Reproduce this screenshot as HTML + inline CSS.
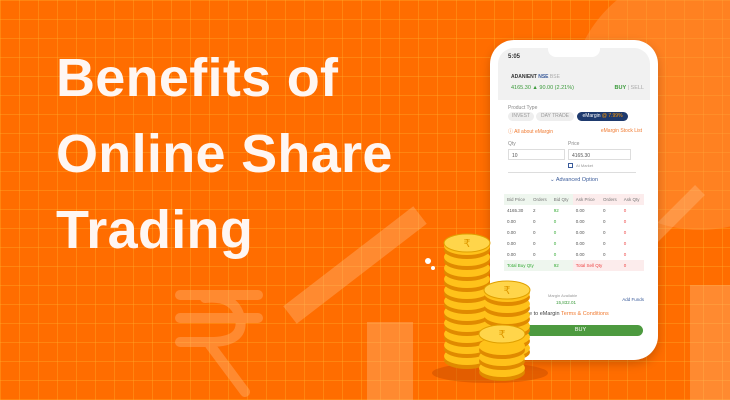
<!DOCTYPE html><html><head><style>
*{margin:0;padding:0;box-sizing:border-box}
body{width:730px;height:400px;overflow:hidden;position:relative;background:#ff6d00;font-family:"Liberation Sans",sans-serif}
.grid{position:absolute;inset:0;background-image:linear-gradient(rgba(255,170,40,.4) 1px,transparent 1px),linear-gradient(90deg,rgba(255,170,40,.4) 1px,transparent 1px);background-size:19px 19px}
h1{position:absolute;left:56px;top:40px;color:#fff6f2;font-size:54px;line-height:76px;font-weight:bold;letter-spacing:0.3px}
.ph{position:absolute;left:490px;top:40px;width:168px;height:320px;background:#fff;border-radius:24px;box-shadow:0 4px 10px rgba(0,0,0,.2)}
.sc{position:absolute;left:8px;top:8px;width:152px;height:303px;border-radius:16px;overflow:hidden;background:#fff;font-size:5px;color:#555}
.t{position:absolute}
table{border-collapse:collapse;width:100%;font-size:4.5px}
td{height:11px;padding-left:3px}
</style></head><body>
<div class="grid"></div>
<svg style="position:absolute;left:0;top:0" width="730" height="400">
<circle cx="700" cy="100" r="130" fill="#ff9a4a" opacity=".45"/>
<g opacity=".35"><path d="M180 295 H258 M180 318 H258 M180 342 H210 Q245 342 240 318 Q235 295 205 298 M210 345 L245 392" stroke="#ffc08a" stroke-width="10" fill="none" stroke-linecap="round"/>
<path d="M290 315 L420 215" stroke="#ffc08a" stroke-width="22"/>
<rect x="367" y="322" width="46" height="80" fill="#ffc08a"/>
<rect x="690" y="285" width="40" height="120" fill="#ffc08a"/>
<path d="M650 240 L700 190" stroke="#ffc08a" stroke-width="14"/></g>
<circle cx="428" cy="261" r="3" fill="#fff"/><circle cx="433" cy="268" r="2" fill="#fff"/>
</svg>
<div class="ph"><div class="sc">
<div class="t" style="left:0;top:0;width:152px;height:52px;background:#f1f1f1"></div>
<div class="t" style="left:10px;top:6px;font-size:6px;font-weight:bold;color:#333">5:05</div>
<div class="t" style="left:50px;top:0;width:52px;height:9px;background:#fff;border-radius:0 0 8px 8px"></div>
<div class="t" style="left:13px;top:26px;font-size:5px;font-weight:bold;color:#333">ADANIENT <span style="color:#3a5b9a">NSE</span> <span style="color:#aaa;font-weight:normal">BSE</span></div>
<div class="t" style="left:13px;top:37px;font-size:5.5px;color:#3a9a3a">4165.30 ▲ 90.00 (2.21%)</div>
<div class="t" style="right:6px;top:37px;font-size:5.5px;color:#3a9a3a;font-weight:bold">BUY <span style="color:#aaa;font-weight:normal">| SELL</span></div>
<div class="t" style="left:10px;top:57px;color:#888">Product Type</div>
<div class="t" style="left:10px;top:64px;width:26px;height:9px;background:#eee;border-radius:5px;text-align:center;line-height:9px;color:#999">INVEST</div>
<div class="t" style="left:38px;top:64px;width:38px;height:9px;background:#eee;border-radius:5px;text-align:center;line-height:9px;color:#999">DAY TRADE</div>
<div class="t" style="left:79px;top:64px;width:51px;height:9px;background:#1e3a6e;border-radius:5px;text-align:center;line-height:9px;color:#fff">eMargin <span style="color:#f90">@ 7.99%</span></div>
<div class="t" style="left:10px;top:80px;color:#f07a30">ⓘ All about eMargin</div>
<div class="t" style="right:8px;top:80px;color:#f07a30">eMargin Stock List</div>
<div class="t" style="left:10px;top:93px;color:#888">Qty</div>
<div class="t" style="left:70px;top:93px;color:#888">Price</div>
<div class="t" style="left:10px;top:101px;width:57px;height:11px;border:1px solid #ddd;padding:3px">10</div>
<div class="t" style="left:70px;top:101px;width:63px;height:11px;border:1px solid #ddd;padding:3px">4165.30</div>
<div class="t" style="left:70px;top:115px;width:5px;height:5px;border:1px solid #3a5b9a"></div>
<div class="t" style="left:78px;top:115px;color:#999;font-size:4px">At Market</div>
<div class="t" style="left:10px;top:124px;width:128px;border-top:1px solid #ddd"></div>
<div class="t" style="left:0;width:152px;top:129px;text-align:center;color:#3a5b9a;font-size:5.5px">⌄ Advanced Option</div>
<div class="t" style="left:6px;top:146px;width:140px">
<table><tr style="background:#eef6ee;color:#777"><td>Bid Price</td><td>Orders</td><td>Bid Qty</td><td style="background:#fcecec">Ask Price</td><td style="background:#fcecec">Orders</td><td style="background:#fcecec">Ask Qty</td></tr>
<tr><td>4165.30</td><td>2</td><td style="color:#3a3">92</td><td>0.00</td><td>0</td><td style="color:#e44">0</td></tr>
<tr><td>0.00</td><td>0</td><td style="color:#3a3">0</td><td>0.00</td><td>0</td><td style="color:#e44">0</td></tr>
<tr><td>0.00</td><td>0</td><td style="color:#3a3">0</td><td>0.00</td><td>0</td><td style="color:#e44">0</td></tr>
<tr><td>0.00</td><td>0</td><td style="color:#3a3">0</td><td>0.00</td><td>0</td><td style="color:#e44">0</td></tr>
<tr><td>0.00</td><td>0</td><td style="color:#3a3">0</td><td>0.00</td><td>0</td><td style="color:#e44">0</td></tr>
<tr style="background:#eef6ee;color:#3a3"><td colspan="2">Total Buy Qty</td><td>92</td><td colspan="2" style="background:#fcecec;color:#e44">Total Sell Qty</td><td style="background:#fcecec;color:#e44">0</td></tr></table></div>
<div class="t" style="left:50px;top:245px;color:#999;font-size:4px">Margin Available</div>
<div class="t" style="left:58px;top:252px;color:#3a9a3a;font-size:4.5px">15,832.01</div>
<div class="t" style="right:6px;top:249px;color:#3a5b9a;font-size:4.5px">Add Funds</div>
<div class="t" style="left:20px;top:263px;font-size:5.5px;color:#444">agree to eMargin <span style="color:#f07a30">Terms &amp; Conditions</span></div>
<div class="t" style="left:20px;top:277px;width:125px;height:11px;background:#4d9a3f;border-radius:6px;color:#fff;text-align:center;line-height:11px;font-size:5.5px">BUY</div>
</div></div>
<svg style="position:absolute;left:420px;top:225px" width="140" height="175">
<defs><g id="c"><ellipse cx="0" cy="7" rx="23" ry="9" fill="#e08a00"/><ellipse cx="0" cy="3" rx="23" ry="9" fill="#ffc21a"/></g>
<g id="top"><ellipse cx="0" cy="0" rx="23" ry="9" fill="#ffd54a" stroke="#e0a000"/><text x="0" y="4" font-size="11" text-anchor="middle" fill="#e09a00" font-family="DejaVu Sans">₹</text></g></defs>
<ellipse cx="70" cy="148" rx="58" ry="10" fill="#c04a00" opacity=".45"/>
<use href="#c" x="47" y="128"/><use href="#c" x="47" y="117"/><use href="#c" x="47" y="106"/><use href="#c" x="47" y="95"/><use href="#c" x="47" y="84"/><use href="#c" x="47" y="73"/><use href="#c" x="47" y="62"/><use href="#c" x="47" y="51"/><use href="#c" x="47" y="40"/><use href="#c" x="47" y="29"/><use href="#c" x="47" y="18"/>
<use href="#top" x="47" y="18"/>
<use href="#c" x="87" y="120"/><use href="#c" x="87" y="109"/><use href="#c" x="87" y="98"/><use href="#c" x="87" y="87"/><use href="#c" x="87" y="76"/><use href="#c" x="87" y="65"/>
<use href="#top" x="87" y="65"/>
<use href="#c" x="82" y="140"/><use href="#c" x="82" y="129"/><use href="#c" x="82" y="118"/>
<use href="#top" x="82" y="109"/>
</svg>
<h1>Benefits of<br>Online Share<br>Trading</h1>
</body></html>
